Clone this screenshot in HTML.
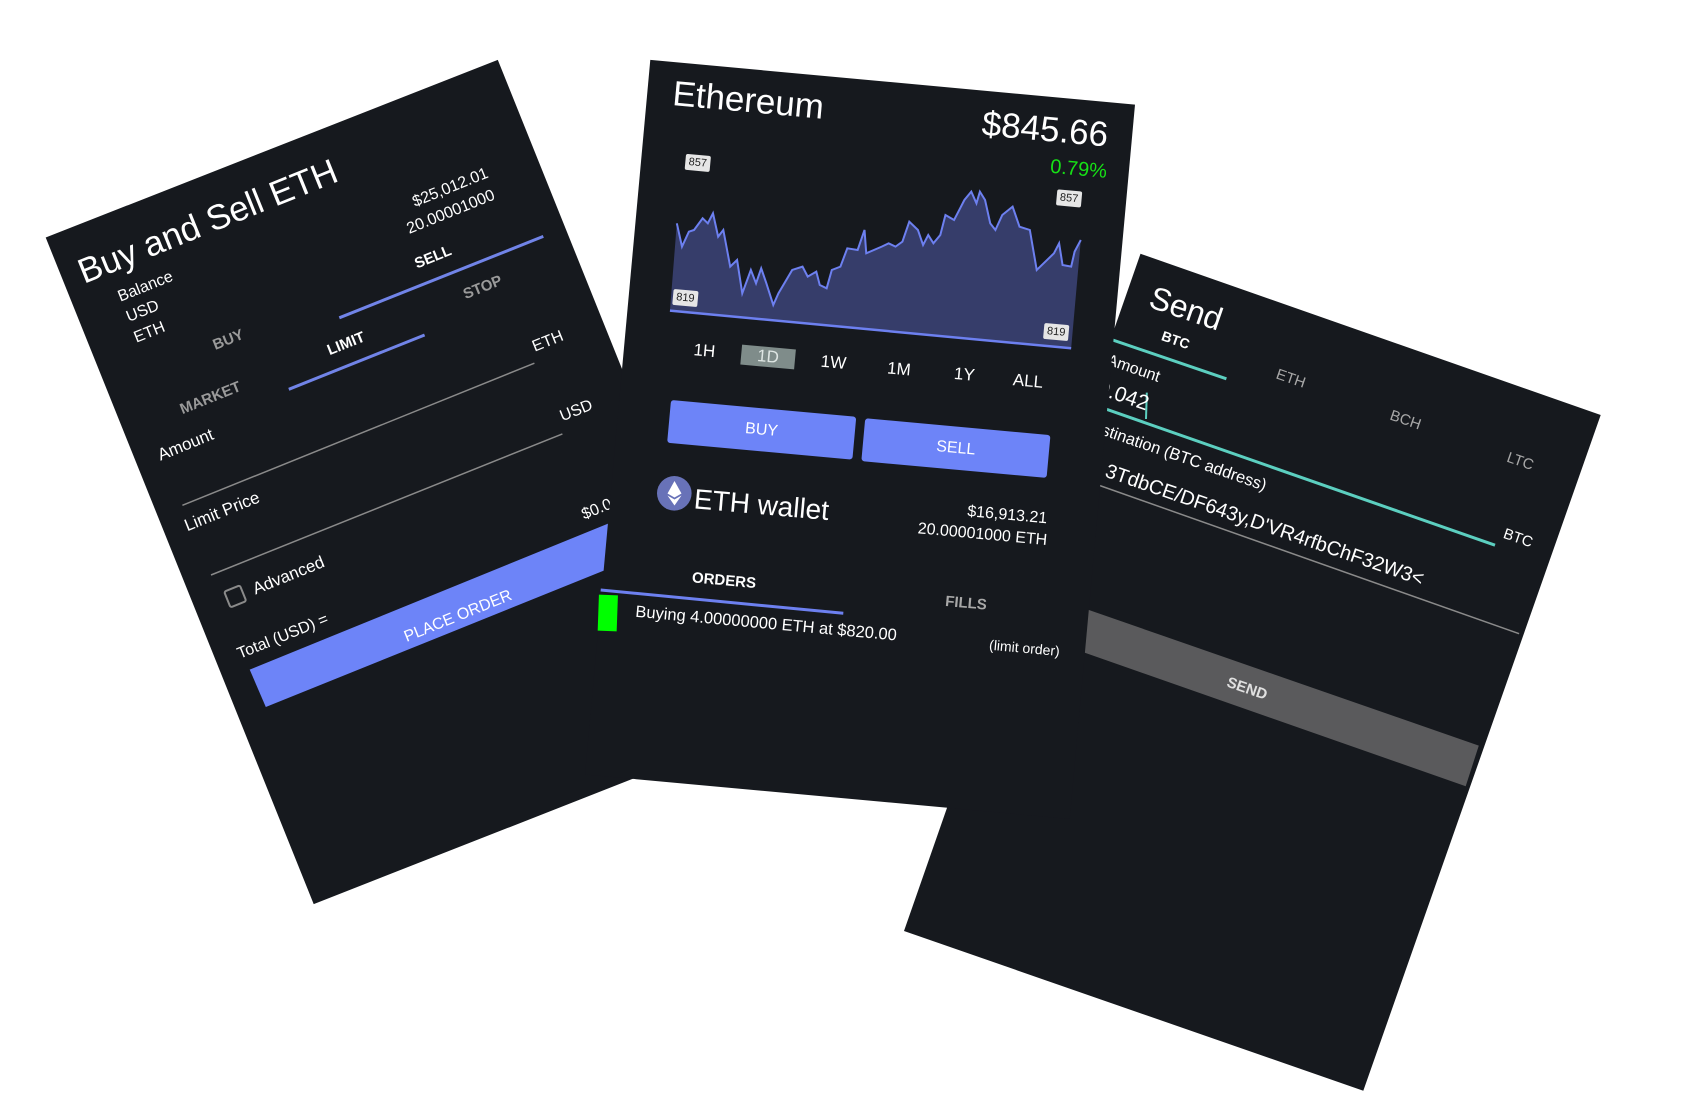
<!DOCTYPE html>
<html><head><meta charset="utf-8"><style>
html,body{margin:0;padding:0;background:#fff;width:1708px;height:1112px;overflow:hidden}
svg{display:block}
text{font-family:"Liberation Sans",Arial,sans-serif}
</style></head><body>
<svg width="1708" height="1112" viewBox="0 0 1708 1112" xmlns="http://www.w3.org/2000/svg">
<!-- LEFT PANEL -->
<polygon points="45.7,237.5 497.8,59.9 765.8,726.6 313.7,904.1" fill="#16191e"/>
<g fill="#fff">
<text x="84" y="284" font-size="35" transform="rotate(-22 84 284)">Buy and Sell ETH</text>
<text x="120.4" y="301.8" font-size="16" transform="rotate(-22 120.4 301.8)">Balance</text>
<text x="128.8" y="322" font-size="16" transform="rotate(-22 128.8 322)">USD</text>
<text x="136.4" y="342.8" font-size="16" transform="rotate(-22 136.4 342.8)">ETH</text>
<text x="415" y="207" font-size="16" transform="rotate(-22 415 207)">$25,012.01</text>
<text x="409.3" y="233.9" font-size="16" transform="rotate(-22 409.3 233.9)">20.00001000</text>
<text x="417" y="268.6" font-size="15" font-weight="bold" transform="rotate(-22 417 268.6)">SELL</text>
<text x="215.3" y="350" font-size="15" font-weight="bold" fill="#9a9a9a" transform="rotate(-22 215.3 350)">BUY</text>
<text x="465.6" y="299.3" font-size="15" font-weight="bold" fill="#9a9a9a" transform="rotate(-22 465.6 299.3)">STOP</text>
<text x="329.7" y="355.3" font-size="15" font-weight="bold" transform="rotate(-22 329.7 355.3)">LIMIT</text>
<text x="182.4" y="414.3" font-size="15" font-weight="bold" fill="#9a9a9a" transform="rotate(-22 182.4 414.3)">MARKET</text>
<text x="534.8" y="351.8" font-size="16" transform="rotate(-22 534.8 351.8)">ETH</text>
<text x="160.5" y="460.7" font-size="17" transform="rotate(-22 160.5 460.7)">Amount</text>
<text x="562.4" y="421.4" font-size="16" transform="rotate(-22 562.4 421.4)">USD</text>
<text x="187.3" y="531.4" font-size="17" transform="rotate(-22 187.3 531.4)">Limit Price</text>
<text x="584.2" y="519.6" font-size="16" transform="rotate(-22 584.2 519.6)">$0.00</text>
<text x="255.5" y="594.6" font-size="17" transform="rotate(-22 255.5 594.6)">Advanced</text>
<text x="239.8" y="658.9" font-size="16" transform="rotate(-22 239.8 658.9)">Total (USD) =</text>
</g>
<line x1="339.3" y1="317.8" x2="543.3" y2="236.4" stroke="#7184e8" stroke-width="3"/>
<line x1="288.8" y1="389.3" x2="424.6" y2="335" stroke="#7184e8" stroke-width="3"/>
<line x1="182.4" y1="505.3" x2="534.4" y2="363.2" stroke="#8a8a8a" stroke-width="1.5"/>
<line x1="211" y1="575" x2="562.4" y2="433.9" stroke="#8a8a8a" stroke-width="1.5"/>
<rect x="226.7" y="587.9" width="17" height="17" rx="2" fill="none" stroke="#8a8a8a" stroke-width="2" transform="rotate(-22 235.2 596.4)"/>
<polygon points="249.7,669.6 660,502.5 660,548 265.8,707" fill="#6d84f8"/>
<text x="406.6" y="642" font-size="16" fill="#fff" transform="rotate(-22 406.6 642)">PLACE ORDER</text>

<!-- RIGHT PANEL -->
<polygon points="1140.5,253.8 1600.7,415 1363.3,1090.7 904,931" fill="#16191e"/>
<line x1="1080" y1="328.8" x2="1226.4" y2="378.8" stroke="#5ccfc0" stroke-width="3"/>
<line x1="1070" y1="396.5" x2="1495" y2="545.2" stroke="#5ccfc0" stroke-width="3"/>
<line x1="1146.8" y1="392.6" x2="1146" y2="419" stroke="#5ccfc0" stroke-width="2"/>
<line x1="1060" y1="471.5" x2="1519.1" y2="633.7" stroke="#8a8a8a" stroke-width="1.5"/>
<polygon points="1040,593 1478.8,745.6 1465.7,786.2 1040,637" fill="#5a5a5c"/>
<g fill="#fff">
<text x="1147.2" y="306.5" font-size="32" transform="rotate(19 1147.2 306.5)">Send</text>
<text x="1175.7" y="339.9" font-size="14" font-weight="bold" text-anchor="middle" dominant-baseline="central" transform="rotate(19 1175.7 339.9)">BTC</text>
<text x="1290.8" y="378.8" font-size="15" fill="#a8a8a8" text-anchor="middle" dominant-baseline="central" transform="rotate(19 1290.8 378.8)">ETH</text>
<text x="1405.5" y="420.2" font-size="15" fill="#a8a8a8" text-anchor="middle" dominant-baseline="central" transform="rotate(19 1405.5 420.2)">BCH</text>
<text x="1520.2" y="461.5" font-size="15" fill="#a8a8a8" text-anchor="middle" dominant-baseline="central" transform="rotate(19 1520.2 461.5)">LTC</text>
<text x="1158" y="382" font-size="16" text-anchor="end" transform="rotate(19 1158 382)">Amount</text>
<text x="1146" y="410.5" font-size="21" text-anchor="end" transform="rotate(19 1146 410.5)">0.042</text>
<text x="1518" y="538.3" font-size="15" text-anchor="middle" dominant-baseline="central" transform="rotate(19 1518 538.3)">BTC</text>
<text x="1264.3" y="490.8" font-size="16.5" text-anchor="end" transform="rotate(19 1264.3 490.8)">Destination (BTC address)</text>
<text x="1421" y="585.5" font-size="20" text-anchor="end" transform="rotate(19 1421 585.5)">3TdbCE/DF643y,D'VR4rfbChF32W3&lt;</text>
<text x="1247" y="688.8" font-size="15" font-weight="bold" fill="#e0e0e0" text-anchor="middle" dominant-baseline="central" transform="rotate(19 1247 688.8)">SEND</text>
</g>

<!-- MIDDLE PANEL -->
<polygon points="650.3,59.9 1135,104.6 1069.7,819 585,774.5" fill="#16191e"/>
<g fill="#fff">
<text x="671.7" y="105" font-size="35" transform="rotate(5.2 671.7 105)">Ethereum</text>
<text x="981" y="135" font-size="35" transform="rotate(5.2 981 135)">$845.66</text>
<text x="1049.8" y="172.7" font-size="20" fill="#16e016" transform="rotate(5.2 1049.8 172.7)">0.79%</text>
</g>
<g transform="translate(620,50) scale(0.3444,0.3333)">
<polygon fill="#363d6a" points="165,520 180,590 200,545 215,540 240,505 255,520 270,490 285,560 300,540 320,650 340,630 355,730 380,660 395,700 410,655 425,700 445,765 460,730 500,660 530,650 545,680 570,665 580,705 600,715 615,660 640,650 660,595 690,600 710,540 715,610 760,590 780,580 800,590 820,575 840,515 865,540 880,585 895,555 910,580 930,555 945,495 970,510 990,470 1000,450 1020,425 1035,460 1045,425 1060,450 1075,520 1090,540 1110,495 1140,470 1160,530 1190,540 1210,660 1230,640 1260,610 1275,580 1285,645 1310,650 1320,605 1338,570 1310,895 145,782"/>
<polyline fill="none" stroke="#6d80f0" stroke-width="2" vector-effect="non-scaling-stroke" points="165,520 180,590 200,545 215,540 240,505 255,520 270,490 285,560 300,540 320,650 340,630 355,730 380,660 395,700 410,655 425,700 445,765 460,730 500,660 530,650 545,680 570,665 580,705 600,715 615,660 640,650 660,595 690,600 710,540 715,610 760,590 780,580 800,590 820,575 840,515 865,540 880,585 895,555 910,580 930,555 945,495 970,510 990,470 1000,450 1020,425 1035,460 1045,425 1060,450 1075,520 1090,540 1110,495 1140,470 1160,530 1190,540 1210,660 1230,640 1260,610 1275,580 1285,645 1310,650 1320,605 1338,570"/>
<line x1="145" y1="782" x2="1310" y2="895" stroke="#6d80f0" stroke-width="2.5" vector-effect="non-scaling-stroke"/>
</g>
<g font-size="11" fill="#222">
<rect x="685.3" y="154.9" width="25" height="16" rx="2" fill="#e6e6e6" transform="rotate(5.2 697.8 162.9)"/>
<text x="697.8" y="162.9" text-anchor="middle" dominant-baseline="central" transform="rotate(5.2 697.8 162.9)">857</text>
<rect x="1056.6" y="190.4" width="25" height="16" rx="2" fill="#e6e6e6" transform="rotate(5.2 1069.1 198.4)"/>
<text x="1069.1" y="198.4" text-anchor="middle" dominant-baseline="central" transform="rotate(5.2 1069.1 198.4)">857</text>
<rect x="672.9" y="290" width="25" height="16" rx="2" fill="#e6e6e6" transform="rotate(5.2 685.4 298)"/>
<text x="685.4" y="298" text-anchor="middle" dominant-baseline="central" transform="rotate(5.2 685.4 298)">819</text>
<rect x="1043.7" y="324" width="25" height="16" rx="2" fill="#e6e6e6" transform="rotate(5.2 1056.2 332)"/>
<text x="1056.2" y="332" text-anchor="middle" dominant-baseline="central" transform="rotate(5.2 1056.2 332)">819</text>
</g>
<rect x="741.1" y="347" width="54" height="20" fill="#7f8c8a" transform="rotate(5.2 768.1 357)"/>
<g fill="#fff" font-size="17" text-anchor="middle" dominant-baseline="central">
<text x="704.4" y="350.7" transform="rotate(5.2 704.4 350.7)">1H</text>
<text x="768.1" y="356.5" fill="#dfe6e4" transform="rotate(5.2 768.1 356.5)">1D</text>
<text x="833.5" y="362.3" transform="rotate(5.2 833.5 362.3)">1W</text>
<text x="899" y="369" transform="rotate(5.2 899 369)">1M</text>
<text x="964.4" y="374.3" transform="rotate(5.2 964.4 374.3)">1Y</text>
<text x="1028" y="381" transform="rotate(5.2 1028 381)">ALL</text>
</g>
<rect x="668.7" y="408.3" width="186" height="43" rx="3" fill="#6d84f8" transform="rotate(5.2 761.7 429.8)"/>
<rect x="862.9" y="426.6" width="186" height="43" rx="3" fill="#6d84f8" transform="rotate(5.2 955.9 448.1)"/>
<g fill="#fff" font-size="16" text-anchor="middle" dominant-baseline="central">
<text x="761.5" y="430" transform="rotate(5.2 761.5 430)">BUY</text>
<text x="955.8" y="448.3" transform="rotate(5.2 955.8 448.3)">SELL</text>
</g>
<circle cx="674.3" cy="493.3" r="17.3" fill="#6872b8"/>
<polygon points="674.5,481 681.5,493.5 674.5,497.5 667.5,493.5" fill="#fff"/>
<polygon points="667.5,495.5 674.5,499.5 681.5,495.5 674.5,505.5" fill="#fff"/>
<g fill="#fff">
<text x="693.3" y="508.3" font-size="28" transform="rotate(5 693.3 508.3)">ETH wallet</text>
<text x="1046.7" y="523.3" font-size="16" text-anchor="end" transform="rotate(5.2 1046.7 523.3)">$16,913.21</text>
<text x="1046.7" y="545" font-size="16" text-anchor="end" transform="rotate(5.2 1046.7 545)">20.00001000 ETH</text>
<text x="724" y="580.7" font-size="15" font-weight="bold" text-anchor="middle" dominant-baseline="central" transform="rotate(5.2 724 580.7)">ORDERS</text>
<text x="966" y="603.3" font-size="15" font-weight="bold" fill="#a8a8a8" text-anchor="middle" dominant-baseline="central" transform="rotate(5.2 966 603.3)">FILLS</text>
<text x="635" y="616.7" font-size="16.5" transform="rotate(5.2 635 616.7)">Buying 4.00000000 ETH at $820.00</text>
<text x="1059.3" y="656" font-size="14" text-anchor="end" transform="rotate(5.2 1059.3 656)">(limit order)</text>
</g>
<line x1="600.7" y1="590" x2="843.3" y2="613.3" stroke="#6d80f0" stroke-width="3"/>
<rect x="598.3" y="595" width="19" height="36" fill="#00ff00" transform="rotate(2 607.8 613)"/>
</svg>
</body></html>
